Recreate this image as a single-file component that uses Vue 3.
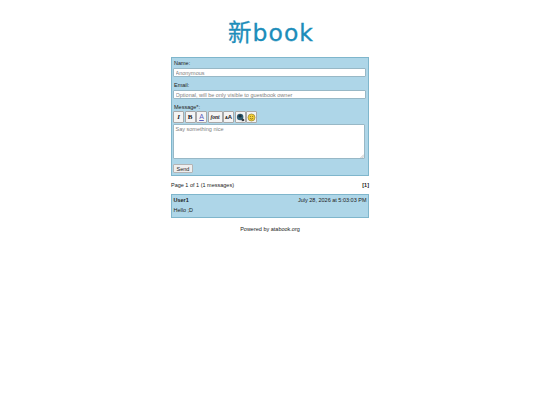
<template>
  <div class="page">
    <h1 class="logo">新book</h1>

    <form class="panel form" @submit.prevent>
      <label class="label" for="name">Name:</label>
      <input id="name" class="field" type="text" placeholder="Anonymous" />
      <label class="label" for="email">Email:</label>
      <input id="email" class="field" type="text" placeholder="Optional, will be only visible to guestbook owner" />
      <label class="label" for="message">Message*:</label>
      <div class="toolbar">
        <button type="button" class="tool"><i class="glyph italic">I</i></button>
        <button type="button" class="tool"><b class="glyph bold">B</b></button>
        <button type="button" class="tool"><span class="glyph under">A</span></button>
        <button type="button" class="tool wide"><i class="glyph font">font</i></button>
        <button type="button" class="tool"><span class="glyph size"><small>A</small>A</span></button>
        <button type="button" class="tool">
          <svg viewBox="0 0 10 10" class="icon">
            <circle cx="4.6" cy="4.4" r="3.6" fill="#2f5f74" />
            <path d="M3 2.2 5.6 1.6 6.6 4 4.4 5.4 2.6 4Z" fill="#20303a" />
            <path d="M6 6.2 9 6.8 9.2 9 6.4 9.2Z" fill="#3a3f44" />
          </svg>
        </button>
        <button type="button" class="tool">
          <svg viewBox="0 0 10 10" class="icon">
            <circle cx="5" cy="5" r="3.9" fill="#f2cf3a" stroke="#8a7a22" stroke-width=".7" />
            <circle cx="3.7" cy="4" r=".55" fill="#4a3c10" />
            <circle cx="6.3" cy="4" r=".55" fill="#4a3c10" />
            <path d="M3.2 5.9Q5 7.7 6.8 5.9" fill="none" stroke="#4a3c10" stroke-width=".6" />
          </svg>
        </button>
      </div>
      <div class="area-wrap">
        <textarea id="message" class="field area" placeholder="Say something nice"></textarea>
        <svg class="grip" viewBox="0 0 4 4">
          <path d="M0.5 4 4 0.5M2.3 4 4 2.3" stroke="#8a8a8a" stroke-width=".5" fill="none" />
        </svg>
      </div>
      <button type="button" class="send">Send</button>
    </form>

    <div class="pager">
      <span>Page 1 of 1 (1 messages)</span>
      <b>[1]</b>
    </div>

    <div v-for="entry in entries" :key="entry.user" class="panel entry">
      <div class="entry-head">
        <b>{{ entry.user }}</b>
        <span>{{ entry.date }}</span>
      </div>
      <p class="entry-body">{{ entry.text }}</p>
    </div>

    <p class="powered">Powered by <a href="#" class="link">atabook.org</a></p>
  </div>
</template>

<script setup>
const entries = [
  { user: 'User1', date: 'July 28, 2026 at 5:03:03 PM', text: 'Hello ;D' }
]
</script>

<style>
html,
body {
  background: #fff;
}
</style>

<style scoped>
.page {
  width: 198px;
  margin: 0 auto;
  font-family: 'Liberation Sans', Arial, sans-serif;
  font-size: 5.5px;
  line-height: 6px;
  color: #222;
}

.logo {
  margin: 0;
  height: 57px;
  padding: 16px 0 0 2px;
  box-sizing: border-box;
  text-align: center;
  font-family: 'DejaVu Sans', 'Noto Sans CJK SC', sans-serif;
  font-size: 23.5px;
  font-weight: 400;
  letter-spacing: 1px;
  line-height: 34px;
  color: #1c8dba;
  -webkit-text-stroke: 0.3px #1c8dba;
}

.panel {
  box-sizing: border-box;
  background: #aed6e8;
  border: 1px solid #7fb6cc;
}

.form {
  display: flex;
  flex-direction: column;
  align-items: flex-start;
  height: 119px;
  padding: 2px 1px;
}

.label {
  height: 6px;
  margin-bottom: 2px;
  padding-left: 1px;
}

.field {
  box-sizing: border-box;
  width: 193px;
  height: 9px;
  margin: 0 0 5px;
  padding: 0 1.5px;
  border: 1px solid #98b8c6;
  border-radius: 1px;
  background: #fff;
  font: inherit;
  outline: none;
}

.field::placeholder {
  color: #808080;
}

.toolbar {
  display: flex;
  gap: 0.5px;
  margin-top: -1px;
  margin-bottom: 1px;
}

.tool {
  display: flex;
  align-items: center;
  justify-content: center;
  box-sizing: border-box;
  width: 11px;
  height: 12px;
  padding: 0;
  border: 1px solid #a8a8a8;
  border-radius: 1px;
  background: #f4f4f4;
}

.tool.wide {
  width: 15px;
}

.glyph {
  font-family: 'Liberation Serif', serif;
  font-size: 7px;
  line-height: 8px;
  color: #222;
}

.italic,
.bold {
  font-weight: 700;
}

.under {
  font-family: 'Liberation Sans', sans-serif;
  color: #5a5fc0;
  text-decoration: underline;
}

.font {
  font-size: 5.5px;
  font-weight: 700;
}

.size {
  font-family: 'Liberation Sans', sans-serif;
  font-weight: 700;
  font-size: 6px;
}

.size small {
  font-size: 4px;
}

.icon {
  width: 9px;
  height: 9px;
}

.area-wrap {
  position: relative;
  height: 35px;
  margin-bottom: 5px;
}

.area {
  display: block;
  width: 192px;
  height: 35px;
  padding: 1px 1.5px;
  margin: 0;
  resize: none;
}

.grip {
  position: absolute;
  right: 1px;
  bottom: 1px;
  width: 4px;
  height: 4px;
}

.send {
  box-sizing: border-box;
  width: 20px;
  height: 9px;
  padding: 0;
  border: 1px solid #b4b4b4;
  border-radius: 1px;
  background: #efefef;
  font: inherit;
  color: #222;
}

.pager {
  display: flex;
  justify-content: space-between;
  height: 18px;
  padding-top: 6px;
  box-sizing: border-box;
}

.entry {
  height: 24px;
  padding: 2px 1.5px;
}

.entry-head {
  display: flex;
  justify-content: space-between;
}

.entry-body {
  margin: 4px 0 0;
}

.powered {
  margin: 8px 0 0;
  text-align: center;
}

.link {
  color: #222;
  text-decoration: underline;
  text-decoration-thickness: 0.7px;
  text-underline-offset: 1px;
}
</style>
